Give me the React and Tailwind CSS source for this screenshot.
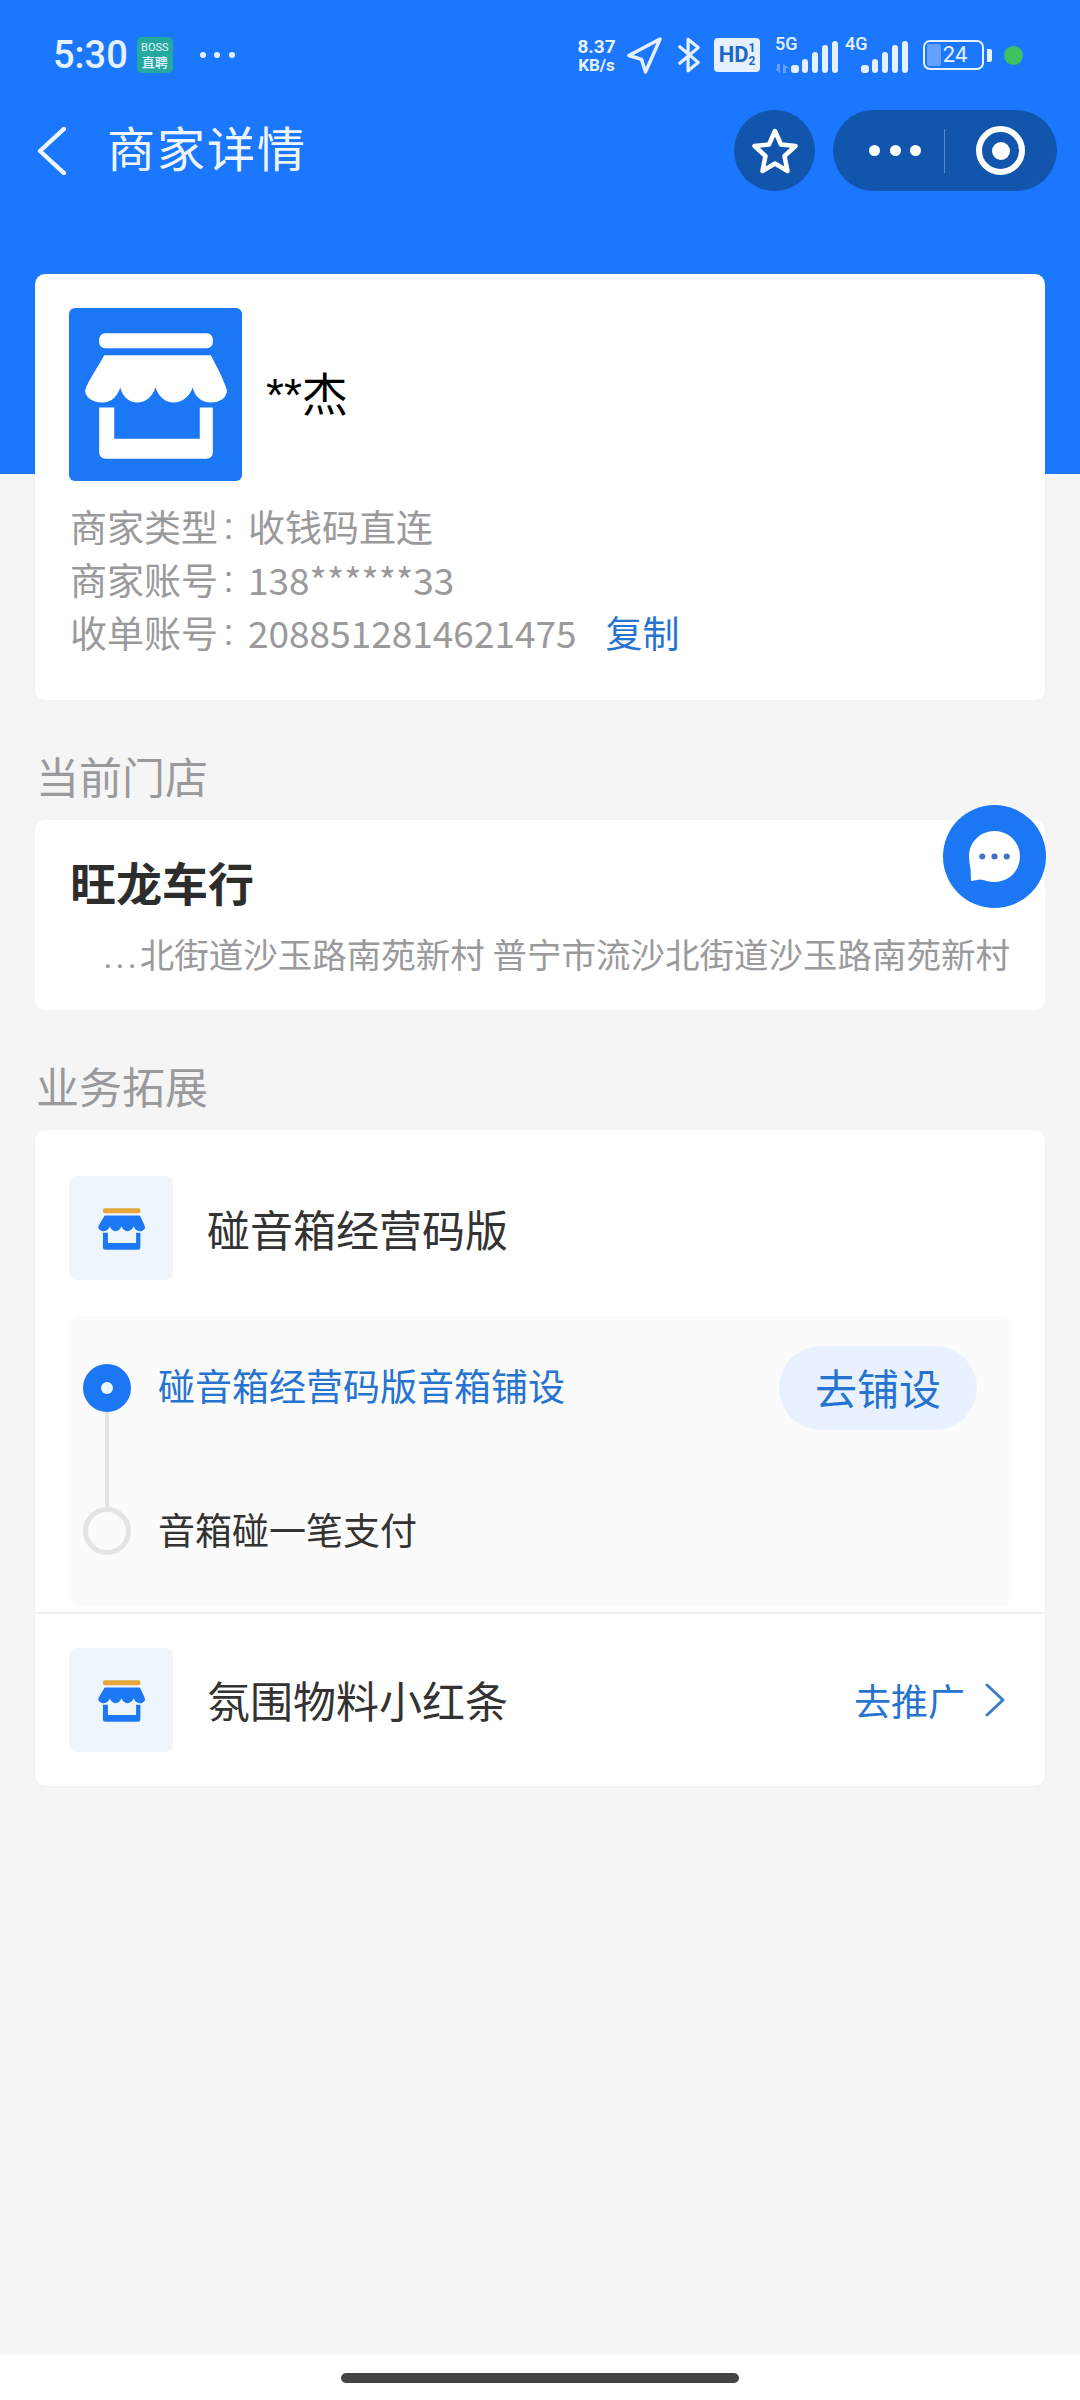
const FONT = { fontFamily: '"Noto Sans CJK SC", Roboto, sans-serif' }

function Store({ roof = "#fff", top = "#fff", base = "#fff", className }) {
  return (
    <svg viewBox="0 0 172 172" className={className}>
      <rect x="30" y="25" width="113" height="15" rx="6" fill={top} />
      <path
        d="M35 47H141C148 60 155 74 157 82C157 89 150 94 141 94C132 94 125 88 123 79C120 88 112 94 104 94C96 94 89 88 86 79C83 88 76 94 68 94C60 94 53 88 51 79C48 88 42 94 33 94C24 94 16 89 16 82C18 74 28 60 35 47Z"
        fill={roof}
      />
      <path d="M30 99H45V130H130V99H143V143Q143 150 136 150H37Q30 150 30 143Z" fill={base} />
    </svg>
  )
}

function Signal({ className }) {
  return (
    <svg viewBox="0 0 47 32" className={className}>
      <rect x="0" y="24" width="8" height="8" rx="3" fill="#e6f1ff" />
      <rect x="11" y="18" width="6" height="14" rx="3" fill="#e6f1ff" />
      <rect x="21" y="11" width="6" height="21" rx="3" fill="#e6f1ff" />
      <rect x="31" y="4" width="6" height="28" rx="3" fill="#e6f1ff" />
      <rect x="41" y="0" width="6" height="32" rx="3" fill="#e6f1ff" />
    </svg>
  )
}

function Dots({ size, gap, color }) {
  return (
    <div className={`flex ${gap}`}>
      <span className={`${size} ${color} rounded-full`} />
      <span className={`${size} ${color} rounded-full`} />
      <span className={`${size} ${color} rounded-full`} />
    </div>
  )
}

function StatusBar() {
  return (
    <div className="h-[110px] pl-[53px] pr-[57px] flex items-center text-[#e6f1ff]">
      <span className="text-[38px] leading-none font-medium [font-family:Roboto]">5:30</span>
      <div className="ml-[9px] w-[36px] h-[36px] rounded-[5px] bg-[#24a9a0] flex flex-col items-center justify-center">
        <span className="text-[11px] leading-[13px] [font-family:Roboto]">BOSS</span>
        <span className="text-[13px] leading-[15px] font-medium">直聘</span>
      </div>
      <div className="ml-[27px]">
        <Dots size="w-[6px] h-[6px]" gap="gap-[8.500px]" color="bg-[#e6f1ff]" />
      </div>
      <div className="ml-auto flex items-center">
        <div className="w-[41px] font-bold text-center [font-family:Roboto] whitespace-nowrap flex flex-col items-center">
          <span className="text-[19px] leading-[20px]">8.37</span>
          <span className="text-[17px] leading-[17px]">KB/s</span>
        </div>
        <svg viewBox="0 0 38 38" className="ml-[9px] w-[37px] h-[37px]" fill="none" stroke="#e6f1ff" strokeWidth="3.500" strokeLinejoin="round">
          <path d="M35 2L3 19L16 23L20 36Z" />
        </svg>
        <svg viewBox="0 0 26 40" className="ml-[14px] w-[24px] h-[38px]" fill="none" stroke="#e6f1ff" strokeWidth="3.500" strokeLinejoin="round" strokeLinecap="round">
          <path d="M3 11L23 28L12 37V3L23 12L3 29" />
        </svg>
        <div className="ml-[13px] w-[46px] h-[34px] rounded-[4px] bg-[#e6f1ff] text-[#1c65c9] flex items-center justify-center [font-family:Roboto] font-bold">
          <span className="text-[22px] leading-none">HD</span>
          <div className="text-[12px] leading-[13px] text-center">
            <div>1</div>
            <div>2</div>
          </div>
        </div>
        <div className="ml-[15px] w-[63px] h-[36px] relative">
          <span className="absolute left-0 -top-[2px] text-[18px] leading-[18px] font-medium [font-family:Roboto]">5G</span>
          <svg viewBox="0 0 16 9" className="absolute left-[-1px] bottom-0 w-[16px] h-[9px]" fill="#e6f1ff" opacity="0.35">
            <path d="M3 0H6V9L1 5H3ZM9 0L15 4H12V9H9Z" />
          </svg>
          <Signal className="absolute right-0 bottom-0 w-[47px] h-[32px]" />
        </div>
        <div className="ml-[7px] w-[63px] h-[36px] relative">
          <span className="absolute left-0 -top-[2px] text-[18px] leading-[18px] font-medium [font-family:Roboto]">4G</span>
          <Signal className="absolute right-0 bottom-0 w-[47px] h-[32px]" />
        </div>
        <div className="ml-[15px] w-[61px] h-[30px] rounded-[7px] border-[2.500px] border-[#e6f1ff] relative flex items-center justify-center overflow-hidden">
          <div className="absolute left-[2px] top-[2px] bottom-[2px] w-[14px] rounded-[2px] bg-[#e6f1ff]/35" />
          <span className="relative text-[22px] leading-none pl-[3px] [font-family:Roboto]">24</span>
        </div>
        <span className="ml-[3px] w-[5px] h-[13px] rounded-r-[2px] bg-[#e6f1ff]" />
        <span className="ml-[12px] w-[19px] h-[19px] rounded-full bg-[#3ec25f]" />
      </div>
    </div>
  )
}

function NavBar() {
  return (
    <div className="h-[81px] pl-[37px] pr-[23px] flex items-center">
      <svg viewBox="0 0 30 50" className="w-[29px] h-[48px]" fill="none" stroke="#eef6ff" strokeWidth="4.500" strokeLinecap="round" strokeLinejoin="round">
        <path d="M28 2L3 25L28 48" />
      </svg>
      <h1 className="ml-[41px] pb-[10px] text-[48px] leading-none text-[#eef6ff] tracking-[2px]">商家详情</h1>
      <div className="ml-auto flex items-center gap-[18px]">
        <div className="w-[81px] h-[81px] rounded-full bg-[#1155ad] flex items-center justify-center">
          <svg viewBox="0 0 46 46" className="w-[46px] h-[46px]" fill="none" stroke="#fff" strokeWidth="4.500" strokeLinejoin="round">
            <path d="M23 3L29 16.500L43.500 18L32.500 28L35.500 43L23 35.500L10.500 43L13.500 28L2.500 18L17 16.500Z" />
          </svg>
        </div>
        <div className="w-[224px] h-[81px] rounded-full bg-[#1155ad] flex items-center">
          <div className="ml-[36px]">
            <Dots size="w-[11px] h-[11px]" gap="gap-[9.500px]" color="bg-white" />
          </div>
          <div className="ml-[23px] w-px h-[44px] bg-white/30" />
          <div className="ml-[31px] w-[49px] h-[49px] rounded-full border-[6px] border-white flex items-center justify-center">
            <span className="w-[18px] h-[18px] rounded-full bg-white" />
          </div>
        </div>
      </div>
    </div>
  )
}

function InfoRow({ label, children }) {
  return (
    <div className="flex">
      <span>{label}</span>
      <span className="w-[30px] pl-[6px] [font-family:Roboto]">:</span>
      {children}
    </div>
  )
}

function MerchantCard() {
  return (
    <section className="bg-white rounded-[10px] pt-[34px] px-[34px] h-[426px] shadow-[0_1px_3px_rgba(0,0,0,0.02)]">
      <div className="flex items-center">
        <div className="w-[173px] h-[173px] rounded-[6px] bg-[#1c77f5] overflow-hidden">
          <Store className="w-[173px] h-[173px]" />
        </div>
        <span className="ml-[24px] text-[46px] leading-none text-black [font-family:'Liberation_Sans','Noto_Sans_CJK_SC',sans-serif]">**杰</span>
      </div>
      <div className="mt-[19px] pl-px text-[37px] leading-[53px] text-[#9a9a9c]">
        <InfoRow label="商家类型">
          <span>收钱码直连</span>
        </InfoRow>
        <InfoRow label="商家账号">
          <span>138******33</span>
        </InfoRow>
        <InfoRow label="收单账号">
          <span>2088512814621475</span>
          <span className="ml-[29px] text-[#2673d0]">复制</span>
        </InfoRow>
      </div>
    </section>
  )
}

function StoreCard() {
  return (
    <section className="bg-white rounded-[10px] h-[190px] px-[35px] pt-[36px] relative">
      <h3 className="text-[46px] leading-[50px] font-bold text-[#2d2d2d]">旺龙车行</h3>
      <p className="mt-[26px] text-[34.500px] leading-[42px] text-[#9a9a9c] text-right whitespace-nowrap">
        <span className="[font-family:Roboto] tracking-[3px]">...</span>北街道沙玉路南苑新村 普宁市流沙北街道沙玉路南苑新村
      </p>
      {/* floating chat button */}
      <div className="absolute -right-[1px] -top-[15px] w-[103px] h-[103px] rounded-full bg-[#1c77f5] flex items-center justify-center">
        <svg viewBox="0 0 52 52" className="w-[53px] h-[53px]">
          <path d="M26 1C40 1 51 12 51 26C51 40 40 51 26 51C20 51 16 49 12 48.500L3 50L2.500 38C1.500 34 1 30 1 26C1 12 12 1 26 1Z" fill="#fff" />
          <circle cx="14" cy="26" r="3" fill="#3f72c8" />
          <circle cx="26" cy="26" r="3" fill="#3f72c8" />
          <circle cx="38" cy="26" r="3" fill="#3f72c8" />
        </svg>
      </div>
    </section>
  )
}

function BizIcon() {
  return (
    <div className="w-[104px] h-[104px] rounded-[8px] bg-[#eef5fc] flex items-center justify-center">
      <Store roof="#1c77f5" top="#e6a63c" base="#1c77f5" className="w-[57px] h-[57px]" />
    </div>
  )
}

function BusinessCard() {
  return (
    <section className="bg-white rounded-[10px] h-[656px] shadow-[0_1px_2px_rgba(0,0,0,0.04)]">
      <div className="h-[484px] px-[34px] pt-[46px] border-b-2 border-[#efeff0]">
        <div className="flex items-center">
          <BizIcon />
          <span className="ml-[34px] text-[43px] leading-none text-[#333]">碰音箱经营码版</span>
        </div>
        <div className="mt-[36px] ml-[2px] w-[939px] h-[290px] bg-[#fbfbfc] rounded-[8px] pl-[12px] pr-[33px] pt-[30px] flex">
          <div className="w-[48px] flex flex-col items-center pt-[18px]">
            <span className="w-[48px] h-[48px] rounded-full bg-[#1c77f5] flex items-center justify-center shrink-0">
              <span className="w-[12px] h-[12px] rounded-full bg-[#eef6ff]" />
            </span>
            <span className="w-[4px] h-[95px] bg-[#e4e4e6] shrink-0" />
            <span className="w-[48px] h-[48px] rounded-full border-[5px] border-[#e4e4e6] shrink-0" />
          </div>
          <div className="flex-1 ml-[27px]">
            <div className="flex items-center justify-between h-[84px]">
              <span className="pb-[6px] text-[37px] leading-none text-[#2673d0]">碰音箱经营码版音箱铺设</span>
              <span className="w-[198px] h-[84px] pb-[2px] rounded-full bg-[#e8f1fd] text-[#2673d0] text-[42px] leading-none flex items-center justify-center">去铺设</span>
            </div>
            <p className="mt-[69px] text-[37px] leading-[60px] text-[#333]">音箱碰一笔支付</p>
          </div>
        </div>
      </div>
      <div className="h-[172px] pl-[34px] pr-[40px] flex items-center">
        <BizIcon />
        <span className="ml-[34px] pb-[2px] text-[43px] leading-none text-[#333]">氛围物料小红条</span>
        <span className="ml-auto text-[37px] leading-none text-[#2673d0]">去推广</span>
        <svg viewBox="0 0 20 34" className="ml-[20px] w-[20px] h-[34px]" fill="none" stroke="#3c7dc4" strokeWidth="3" strokeLinecap="round" strokeLinejoin="round">
          <path d="M2 2L18 17L2 32" />
        </svg>
      </div>
    </section>
  )
}

function SectionTitle({ children }) {
  return <h2 className="mt-[50px] mb-[20px] pl-px text-[43px] leading-[50px] text-[#9a9a9c]">{children}</h2>
}

export default function App() {
  return (
    <div className="w-[1080px] h-[2400px] bg-[#f5f5f6] overflow-hidden relative" style={FONT}>
      <header className="h-[474px] bg-[#1c77ff]">
        <StatusBar />
        <NavBar />
      </header>

      <main className="relative -mt-[200px] px-[35px]">
        <MerchantCard />
        <SectionTitle>当前门店</SectionTitle>
        <StoreCard />
        <SectionTitle>业务拓展</SectionTitle>
        <BusinessCard />
      </main>

      {/* home indicator */}
      <div className="absolute bottom-0 left-0 right-0 h-[45px] bg-white flex justify-center">
        <span className="mt-[18px] w-[398px] h-[10px] rounded-full bg-[#444]" />
      </div>
    </div>
  )
}
